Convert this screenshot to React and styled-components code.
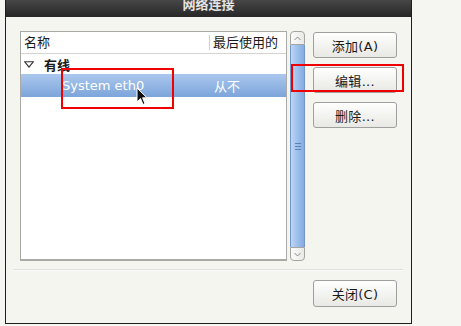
import React from "react";
import styled, { createGlobalStyle } from "styled-components";

const GlobalStyle = createGlobalStyle`
  html, body {
    margin: 0;
    padding: 0;
    background: #f5f5f1;
  }
  body {
    font-family: "DejaVu Sans", "Noto Sans CJK SC", sans-serif;
    font-size: 13px;
    color: #1a1a1a;
  }
`;

const Page = styled.div`
  position: relative;
  width: 461px;
  height: 326px;
  overflow: hidden;
  background: #f5f5f1;
`;

const Window = styled.div`
  margin-left: 5px;
  width: 405px;
  border: 1px solid #1e1e1e;
  border-top: none;
  background: #f5f5f0;
  display: flex;
  flex-direction: column;
`;

const TitleBar = styled.div`
  height: 17px;
  overflow: hidden;
  background: linear-gradient(#474747, #262626);
  display: flex;
  justify-content: center;
`;

const Title = styled.div`
  font-family: "Noto Sans CJK SC", sans-serif;
  font-weight: bold;
  font-size: 13px;
  line-height: 17px;
  margin-top: -5px;
  color: #e4e4e4;
`;

const Body = styled.div`
  padding: 14px 14px 16px 14px;
  display: flex;
  flex-direction: column;
`;

const Main = styled.div`
  display: flex;
  height: 230px;
`;

const ListBox = styled.div`
  flex: 1;
  border: 1px solid #a9a9a6;
  border-bottom-width: 2px;
  background: #ffffff;
  display: flex;
  flex-direction: column;
`;

const HeaderRow = styled.div`
  display: flex;
  height: 21px;
  border-bottom: 1px solid #d4d4d0;
  align-items: center;
`;

const HeadCell = styled.div`
  width: ${({ $w }) => ($w ? `${$w}px` : "auto")};
  flex: ${({ $w }) => ($w ? "none" : 1)};
  padding-left: ${({ $divider }) => ($divider ? "3px" : "3px")};
  border-left: ${({ $divider }) => ($divider ? "1px solid #d0d0cc" : "none")};
  height: 15px;
  line-height: 15px;
  white-space: nowrap;
  box-sizing: border-box;
`;

const GroupRow = styled.div`
  height: 20px;
  display: flex;
  align-items: center;
  padding-left: 3px;
  gap: 10px;
  font-weight: bold;
`;

const Row = styled.div`
  height: 23px;
  display: flex;
  align-items: center;
  color: ${({ $selected }) => ($selected ? "#ffffff" : "#1a1a1a")};
  background: ${({ $selected }) =>
    $selected ? "linear-gradient(#abc7ee, #7ca5da)" : "transparent"};
`;

const Cell = styled.div`
  width: ${({ $w }) => ($w ? `${$w}px` : "auto")};
  flex: ${({ $w }) => ($w ? "none" : 1)};
  padding-left: ${({ $indent }) => $indent}px;
  box-sizing: border-box;
  white-space: nowrap;
`;

const Scrollbar = styled.div`
  width: 15px;
  margin-left: 3px;
  display: flex;
  flex-direction: column;
`;

const ScrollButton = styled.div`
  height: 14px;
  border: 1px solid #a4a4a0;
  border-radius: ${({ $top }) => ($top ? "4px 4px 0 0" : "0 0 4px 4px")};
  background: linear-gradient(90deg, #fbfbfa, #e9e9e6);
  box-sizing: border-box;
  display: flex;
  align-items: center;
  justify-content: center;
`;

const Thumb = styled.div`
  flex: 1;
  border: 1px solid #7497cb;
  border-top: none;
  border-bottom: none;
  background: linear-gradient(90deg, #bcd5f5, #98bbe9 60%, #86abe0);
  display: flex;
  align-items: center;
  justify-content: center;
`;

const Grip = styled.div`
  width: 6px;
  height: 5px;
  border-top: 1px solid #5f82b6;
  border-bottom: 1px solid #5f82b6;
  position: relative;
  &::after {
    content: "";
    display: block;
    height: 0;
    border-top: 1px solid #5f82b6;
    margin-top: 2px;
  }
`;

const ButtonColumn = styled.div`
  width: 84px;
  margin-left: 8px;
  padding-top: 1px;
  display: flex;
  flex-direction: column;
  gap: 9px;
`;

const Button = styled.button`
  width: ${({ $w }) => $w || 84}px;
  height: ${({ $h }) => $h || 26}px;
  border: 1px solid #9f9f9c;
  border-radius: 3px;
  background: linear-gradient(#ffffff, #f1f1ee 60%, #e8e8e4);
  font-family: "DejaVu Sans", "Noto Sans CJK SC", sans-serif;
  font-size: 13px;
  color: #1a1a1a;
  padding: 0;
  letter-spacing: 0.3px;
`;

const Separator = styled.div`
  margin: 8px -6px 0 -6px;
  height: 0;
  border-top: 1px solid #dededa;
  border-bottom: 1px solid #fbfbf9;
`;

const Footer = styled.div`
  display: flex;
  justify-content: flex-end;
  margin-top: 9px;
`;

const Marker = styled.div`
  position: absolute;
  left: ${({ $x }) => $x}px;
  top: ${({ $y }) => $y}px;
  width: ${({ $w }) => $w}px;
  height: ${({ $h }) => $h}px;
  border: 2px solid #f00000;
  box-sizing: border-box;
`;

const Cursor = styled.svg`
  position: absolute;
  left: 136px;
  top: 87px;
`;

function Chevron({ up }) {
  return (
    <svg width="7" height="5" viewBox="0 0 7 5">
      <path
        d={up ? "M0.5 4 L3.5 1 L6.5 4" : "M0.5 1 L3.5 4 L6.5 1"}
        fill="none"
        stroke="#8a8a88"
        strokeWidth="1"
      />
    </svg>
  );
}

export default function App() {
  return (
    <Page>
      <GlobalStyle />
      <Window>
        <TitleBar>
          <Title>网络连接</Title>
        </TitleBar>
        <Body>
          <Main>
            <ListBox>
              <HeaderRow>
                <HeadCell $w={188}>名称</HeadCell>
                <HeadCell $divider>最后使用的</HeadCell>
              </HeaderRow>
              <GroupRow>
                <svg width="10" height="7" viewBox="0 0 10 7">
                  <path d="M0.8 0.8 H9.2 L5 6.2 Z" fill="none" stroke="#333" strokeWidth="1.1" />
                </svg>
                <span>有线</span>
              </GroupRow>
              <Row $selected>
                <Cell $w={188} $indent={41}>System eth0</Cell>
                <Cell $indent={5}>从不</Cell>
              </Row>
            </ListBox>
            <Scrollbar>
              <ScrollButton $top>
                <Chevron up />
              </ScrollButton>
              <Thumb>
                <Grip />
              </Thumb>
              <ScrollButton>
                <Chevron />
              </ScrollButton>
            </Scrollbar>
            <ButtonColumn>
              <Button>添加(A)</Button>
              <Button>编辑...</Button>
              <Button>删除...</Button>
            </ButtonColumn>
          </Main>
          <Separator />
          <Footer>
            <Button $h={27}>关闭(C)</Button>
          </Footer>
        </Body>
      </Window>
      <Marker $x={61} $y={68} $w={113} $h={41} />
      <Marker $x={291} $y={64} $w={113} $h={28} />
      <Cursor width="12" height="19" viewBox="0 0 12 19">
        <path
          d="M1 1 L1 15 L4.5 11.5 L7 17.5 L9 16.6 L6.6 10.8 L11 10.8 Z"
          fill="#111"
          stroke="#fff"
          strokeWidth="1"
          strokeLinejoin="round"
        />
      </Cursor>
    </Page>
  );
}
